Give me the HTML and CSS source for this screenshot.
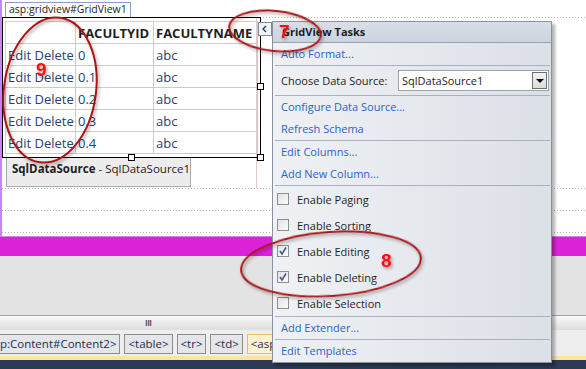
FILE: index.html
```html
<!DOCTYPE html>
<html lang="en">
<head>
    <meta charset="UTF-8">
    <meta name="viewport" content="width=device-width, initial-scale=1.0">
    <title>GridView Tasks</title>
    <link rel="stylesheet" href="styles.css">
</head>
<body>
    <div class="designer">
        <div class="placeholder">
            <div class="control-tag">asp:gridview#GridView1</div>

            <div class="layout-row main-row">
                <div class="layout-cell">
                    <div class="grid-frame">
                        <table class="grid">
                            <colgroup>
                                <col class="col-cmd">
                                <col class="col-id">
                                <col class="col-name">
                            </colgroup>
                            <tr><th></th><th>FACULTYID</th><th>FACULTYNAME</th></tr>
                            <tr><td><a>Edit</a> <a>Delete</a></td><td>0</td><td>abc</td></tr>
                            <tr><td><a>Edit</a> <a>Delete</a></td><td>0.1</td><td>abc</td></tr>
                            <tr><td><a>Edit</a> <a>Delete</a></td><td>0.2</td><td>abc</td></tr>
                            <tr><td><a>Edit</a> <a>Delete</a></td><td>0.3</td><td>abc</td></tr>
                            <tr><td><a>Edit</a> <a>Delete</a></td><td>0.4</td><td>abc</td></tr>
                        </table>
                        <span class="handle handle-mid-right"></span>
                        <span class="handle handle-bottom"></span>
                        <span class="handle handle-corner"></span>
                    </div>
                    <div class="datasource"><b>SqlDataSource</b> - SqlDataSource1</div>
                </div>
            </div>
            <div class="layout-row"></div>
            <div class="layout-row"></div>
            <div class="layout-row last-row"></div>
        </div>
    </div>

    <div class="band"></div>
    <div class="source-view"></div>
    <div class="hscroll"><span class="grip">III</span></div>
    <div class="crumbs">
        <span class="crumb crumb-cut">p:Content#Content2&gt;</span>
        <span class="crumb">&lt;table&gt;</span>
        <span class="crumb">&lt;tr&gt;</span>
        <span class="crumb">&lt;td&gt;</span>
        <span class="crumb crumb-active">&lt;asp</span>
    </div>
    <div class="strip"></div>
    <div class="footer"></div>

    <!-- smart tag glyph + popup -->
    <div class="smart-tag">
        <svg width="12" height="12" viewBox="0 0 12 12"><polyline points="7,3 4,6 7,9" fill="none" stroke="#2c3550" stroke-width="1.3"/></svg>
    </div>

    <div class="tasks">
        <div class="tasks-header">GridView Tasks</div>
        <a class="task-link">Auto Format...</a>
        <div class="task-sep"></div>
        <div class="task-source">
            <span class="source-label">Choose Data Source:</span>
            <div class="dropdown">
                <span>SqlDataSource1</span>
                <span class="dropdown-btn"><i class="arrow"></i></span>
            </div>
        </div>
        <div class="task-sep"></div>
        <a class="task-link">Configure Data Source...</a>
        <a class="task-link">Refresh Schema</a>
        <div class="task-sep"></div>
        <a class="task-link">Edit Columns...</a>
        <a class="task-link">Add New Column...</a>
        <div class="task-sep"></div>
        <label class="task-check"><span class="box"></span>Enable Paging</label>
        <label class="task-check"><span class="box"></span>Enable Sorting</label>
        <label class="task-check"><span class="box checked"><svg width="10" height="10" viewBox="0 0 10 10"><polyline points="2,5 4,8 8,1.5" fill="none" stroke="#485d96" stroke-width="1.6"/></svg></span>Enable Editing</label>
        <label class="task-check"><span class="box checked"><svg width="10" height="10" viewBox="0 0 10 10"><polyline points="2,5 4,8 8,1.5" fill="none" stroke="#485d96" stroke-width="1.6"/></svg></span>Enable Deleting</label>
        <label class="task-check"><span class="box"></span>Enable Selection</label>
        <div class="task-sep"></div>
        <a class="task-link">Add Extender...</a>
        <div class="task-sep"></div>
        <a class="task-link">Edit Templates</a>
    </div>

    <!-- red annotations drawn over the screenshot -->
    <svg class="notes" width="586" height="369" viewBox="0 0 586 369">
        <defs>
            <filter id="shade" x="-20%" y="-20%" width="140%" height="140%">
                <feDropShadow dx="1.5" dy="2" stdDeviation="1.5" flood-color="#000" flood-opacity="0.35"/>
            </filter>
        </defs>
        <g fill="none" stroke="#a81518" stroke-width="2" filter="url(#shade)">
            <ellipse cx="50" cy="90" rx="46" ry="73" transform="rotate(8 50 90)"/>
            <ellipse cx="275" cy="31" rx="46" ry="20" transform="rotate(6 275 31)"/>
            <ellipse cx="331" cy="264" rx="90" ry="32" transform="rotate(-4 331 264)"/>
        </g>
        <g class="note-num" filter="url(#shade)">
            <text x="36" y="76">9</text>
            <text x="279" y="38">7</text>
            <text x="381" y="267">8</text>
        </g>
    </svg>
</body>
</html>
```

FILE: styles.css
```css
* {
    box-sizing: border-box;
    margin: 0;
    padding: 0;
}

body {
    position: relative;
    width: 586px;
    height: 369px;
    overflow: hidden;
    background-color: #fff;
    font-family: "Open Sans", "Noto Sans", sans-serif;
    color: #1e1e1e;
}

/* design surface */

.designer {
    height: 237px;
}

.placeholder {
    height: 237px;
    padding-top: 2px;
    border-left: 2px solid #c784f5;
    border-bottom: 1px solid #c784f5;
}

.control-tag {
    width: max-content;
    height: 15px;
    margin-left: 3px;
    padding: 0 3px;
    border: 1px solid #8a9ec4;
    border-bottom: none;
    font-size: 10.5px;
    line-height: 13px;
    color: #222;
}

.layout-row {
    height: 22px;
    background: repeating-linear-gradient(90deg, #b6b6b6 0 1px, transparent 1px 3px) top left / 100% 1px no-repeat;
}

.main-row {
    height: 171px;
}

.last-row {
    height: 4px;
}

.layout-cell {
    width: 255px;
    height: 100%;
    border-right: 1px solid #e5c8c8;
}

.grid-frame {
    position: relative;
    width: 259px;
    height: 141px;
    padding: 3px 0 0 2px;
    border: 1px solid #000;
}

.grid {
    width: 252px;
    table-layout: fixed;
    border-collapse: collapse;
    font-size: 13px;
}

.col-cmd { width: 70px; }
.col-id { width: 78px; }
.col-name { width: 104px; }

.grid th,
.grid td {
    height: 22px;
    padding: 0 2px;
    border: 1px solid #cbcbcb;
    text-align: left;
    white-space: nowrap;
    overflow: hidden;
    color: #2b4170;
    font-weight: normal;
}

.grid th {
    border-top-color: #e5c8c8;
    font-weight: bold;
    color: #1e1e1e;
}

.grid tr > :first-child {
    border-left-color: #e5c8c8;
}

.handle {
    position: absolute;
    width: 7px;
    height: 7px;
    border: 1px solid #000;
    background-color: #fff;
}

.handle-mid-right { left: 254px; top: 65px; }
.handle-bottom { left: 125px; top: 136px; }
.handle-corner { left: 254px; top: 136px; }

.datasource {
    width: 185px;
    height: 29px;
    margin-left: 4px;
    padding: 2px 0 0 5px;
    border: 1px solid #ababab;
    border-top: none;
    background-color: #ececec;
    font-size: 11.5px;
    line-height: 18px;
    white-space: nowrap;
    color: #222;
}

/* bottom chrome */

.band {
    height: 19px;
    background-color: #dc21d6;
}

.source-view {
    height: 59px;
    background-color: #e3e3e3;
}

.hscroll {
    height: 15px;
    border-top: 1px solid #a2a2a2;
    background: linear-gradient(#f8f8f8, #dedede);
}

.grip {
    display: block;
    margin-left: 145px;
    font-size: 8px;
    font-weight: bold;
    line-height: 13px;
    letter-spacing: -0.5px;
    color: #555;
}

.crumbs {
    display: flex;
    gap: 4px;
    height: 26px;
    padding-top: 4px;
    background-color: #eeeeee;
    white-space: nowrap;
}

.crumb {
    height: 20px;
    padding: 0 3px;
    border: 1px solid #8d8d8d;
    background-color: #e4e6ea;
    font-size: 11.5px;
    line-height: 18px;
    color: #1d2d52;
}

.crumb-cut {
    padding-left: 0;
    border-left: none;
}

.crumb-active {
    width: 44px;
    border-color: #e2c06a;
    background-color: #fdf2cf;
}

.strip {
    height: 4px;
    background-color: #fce4a3;
}

.footer {
    height: 9px;
    background-color: #2c3a55;
}

/* smart tag */

.smart-tag {
    position: absolute;
    left: 258px;
    top: 22px;
    width: 14px;
    height: 14px;
    border: 1px solid #7b89a5;
    background-color: #eef2f9;
}

.smart-tag svg {
    display: block;
}

.tasks {
    position: absolute;
    left: 272px;
    top: 21px;
    width: 280px;
    height: 342px;
    border: 1px solid #8a929e;
    background: linear-gradient(90deg, #eff1f4, #dce0e7);
    box-shadow: 3px 3px 3px rgba(0, 0, 0, 0.3);
    font-size: 11px;
}

.tasks-header {
    height: 21px;
    padding-left: 9px;
    border-bottom: 1px solid #97a1b1;
    background: linear-gradient(#d9dee7, #ccd3de);
    font-weight: bold;
    line-height: 20px;
}

.task-link {
    display: block;
    height: 22px;
    padding-left: 8px;
    line-height: 22px;
    color: #2b63c9;
    cursor: pointer;
}

.task-sep {
    height: 1px;
    margin: 0 1px 0 2px;
    background-color: #a9b1be;
}

.task-source {
    display: flex;
    align-items: center;
    height: 29px;
    padding-left: 8px;
}

.source-label {
    width: 117px;
}

.dropdown {
    display: flex;
    align-items: center;
    justify-content: space-between;
    width: 151px;
    height: 21px;
    padding-left: 3px;
    border: 1px solid #9ba3ae;
    background-color: #fff;
}

.dropdown-btn {
    display: flex;
    align-items: center;
    justify-content: center;
    width: 15px;
    height: 17px;
    margin-right: 1px;
    border: 1px solid #6f6f6f;
    background: linear-gradient(#f2f2f2, #dcdcdc);
}

.arrow {
    border-top: 4px solid #111;
    border-left: 4px solid transparent;
    border-right: 4px solid transparent;
}

.task-check {
    display: flex;
    align-items: center;
    height: 26px;
    padding-left: 4px;
}

.box {
    display: flex;
    align-items: center;
    justify-content: center;
    width: 12px;
    height: 12px;
    margin-right: 8px;
    border: 1px solid #8e8f8f;
    background: linear-gradient(135deg, #e2e2e2, #fbfbfb);
}

/* annotations */

.notes {
    position: absolute;
    left: 0;
    top: 0;
    pointer-events: none;
}

.note-num text {
    font-family: "Liberation Sans", sans-serif;
    font-size: 19px;
    font-weight: bold;
    fill: #ff1010;
}
```
